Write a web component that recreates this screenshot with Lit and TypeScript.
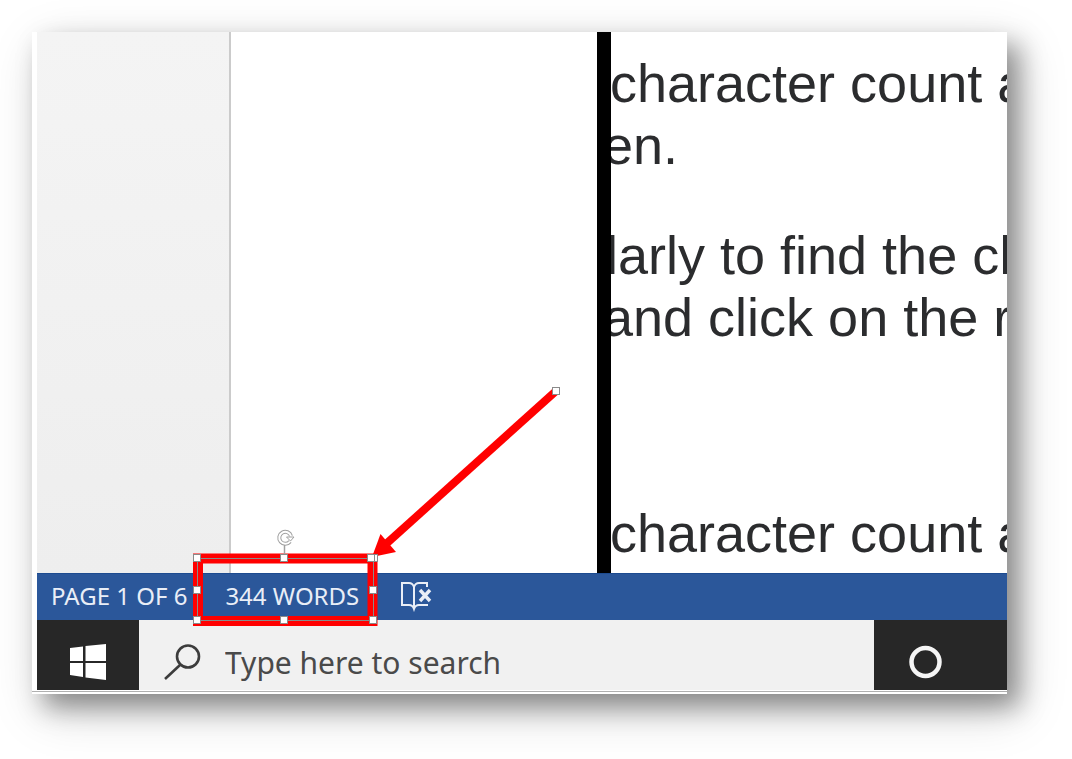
import { LitElement, html, css, svg } from "lit";
import { customElement } from "lit/decorators.js";

const HANDLES: [number, number][] = [
  [197, 558], [284, 558], [374, 558], [371, 558],
  [197, 590], [373, 590],
  [197, 620], [284, 620], [373, 620],
  [556, 391],
];

@customElement("word-document")
class WordDocument extends LitElement {
  static styles = css`
    :host { display: flex; min-height: 0; overflow: hidden; background: #fff; }
    .margin { flex: none; width: 192px; background: linear-gradient(#f4f4f4, #eeeeee); border-right: 2px solid #cbcbcb; }
    .sheet { flex: none; width: 366px; background: #fff; }
    .edge { flex: none; width: 14px; background: #000; z-index: 1; }
    .text { flex: 1; min-width: 0; margin-left: -8px; padding-top: 20px; overflow: hidden; white-space: nowrap;
      font: 54px/62px "Liberation Sans", Arial, sans-serif; color: #2b2c2e; }
    p { margin: 0; }
    .indent { padding-left: 7px; }
    .nudge { padding-left: 3px; }
    .gap { margin-top: 48px; }
    .wide-gap { margin-top: 154px; }
  `;
  render() {
    return html`
      <div class="margin"></div>
      <div class="sheet"></div>
      <div class="edge"></div>
      <div class="text">
        <p class="indent">character count a</p>
        <p>en.</p>
        <p class="nudge gap">larly to find the ch</p>
        <p>and click on the r</p>
        <p class="indent wide-gap">character count a</p>
      </div>
    `;
  }
}

@customElement("status-bar")
class StatusBar extends LitElement {
  static styles = css`
    :host { display: flex; align-items: center; height: 47px; box-sizing: border-box; padding: 0 0 2px 14px;
      background: #2b579a; border-top: 1px solid #1d4b90; }
    button { border: 0; padding: 0; background: none; color: #e9eef7; white-space: nowrap;
      font: 24px/32px "Noto Sans", "Open Sans", sans-serif; }
    .words { margin-left: 38px; }
    .proof { margin-left: 40px; height: 32px; }
    svg { display: block; }
  `;
  render() {
    return html`
      <button>PAGE 1 OF 6</button>
      <button class="words">344 WORDS</button>
      <button class="proof" aria-label="Proofing errors">
        <svg width="34" height="32" viewBox="0 0 34 32" fill="none" stroke="#e9eef7" stroke-width="2">
          <path d="M15 7 C14 4 12 3 10 3 H3 V25 H10 C12 25 14 26 15 29 C16 26 18 25 20 25 H29" />
          <path d="M15 6 V28 M15 7 C16 4 18 3 20 3 H28 V7" />
          <path d="M21 10 L31 21 M31 10 L21 21" stroke-width="3.4" />
        </svg>
      </button>
    `;
  }
}

@customElement("task-bar")
class TaskBar extends LitElement {
  static styles = css`
    :host { display: flex; height: 70px; background: #f1f1f1; }
    button { flex: none; display: flex; align-items: center; border: 0; background: #272727; }
    .start { width: 102px; padding: 14px 0 0 32px; }
    .cortana { width: 133px; padding: 14px 0 0 33px; }
    .search { flex: 1; min-width: 0; display: flex; align-items: center; gap: 24px; padding: 16px 0 0 24px; }
    svg { display: block; flex: none; }
    input { flex: 1; min-width: 0; border: 0; padding: 0; background: none; outline: 0;
      font: 30px/40px "Noto Sans", "Open Sans", sans-serif; height: 40px; }
    input::placeholder { color: #4a4a4a; opacity: 1; }
  `;
  render() {
    return html`
      <button class="start" aria-label="Start">
        <svg width="38" height="38" viewBox="0 0 38 38" fill="#fff">
          <path d="M1 5 L14 3.5 V18 H1Z M16.500 3 L37 1 V18 H16.500Z M1 20 H14 V34 L1 32Z M16.500 20 H37 V37 L16.500 34.500Z" />
        </svg>
      </button>
      <label class="search">
        <svg width="38" height="38" viewBox="0 0 38 38" fill="none" stroke="#3c3c3c" stroke-width="2.6">
          <circle cx="25" cy="12.5" r="11" /><path d="M17 21 L2 35" />
        </svg>
        <input type="text" aria-label="Search" placeholder="Type here to search" />
      </label>
      <button class="cortana" aria-label="Cortana">
        <svg width="36" height="36" viewBox="0 0 36 36" fill="none" stroke="#f5f5f5" stroke-width="4.5">
          <circle cx="18.5" cy="18" r="14" />
        </svg>
      </button>
    `;
  }
}

@customElement("app-root")
class AppRoot extends LitElement {
  static styles = css`
    :host { display: flex; box-sizing: border-box; height: 100vh; padding: 32px 65px 65px 32px; background: #fff; }
    .card { position: relative; flex: 1; min-width: 0; display: flex; flex-direction: column; background: #fff;
      box-shadow: 12px 13px 24px rgba(0, 0, 0, 0.38), 10px 16px 48px rgba(0, 0, 0, 0.18); }
    word-document { flex: 1; }
    word-document, status-bar, task-bar { margin-left: 5px; }
    .rule { height: 1px; margin: 1px 0 2px; background: #b0b0b0; }
    .marks { position: absolute; left: 148px; bottom: 54px; width: 400px; height: 260px; pointer-events: none; }
  `;
  render() {
    return html`
      <div class="card">
        <word-document></word-document>
        <status-bar></status-bar>
        <task-bar></task-bar>
        <div class="rule"></div>
        <svg class="marks" viewBox="180 380 400 260">
          <path d="M556 391 L386 544" stroke="#f00" stroke-width="8" />
          <path d="M372 557 L380.500 534 L396 552Z" fill="#f00" />
          <rect x="198" y="558.5" width="174.500" height="62.500" fill="none" stroke="#f00" stroke-width="10" />
          <rect x="197.5" y="558.5" width="176" height="62" fill="none" stroke="#8a8a8a" />
          <path d="M284.5 544 V555" stroke="#a0a0a0" stroke-width="1.5" />
          <g fill="none">
            <path d="M290 541.5 A6 6 0 1 1 291 536" stroke="#a0a0a0" stroke-width="4" />
            <path d="M290 541.5 A6 6 0 1 1 291 536" stroke="#fff" stroke-width="2" />
            <path d="M286.5 537 H294 L290.5 541Z" fill="#fff" stroke="#a0a0a0" />
          </g>
          ${HANDLES.map(
            ([x, y]) => svg`<rect x=${x - 3.5} y=${y - 3.5} width="7" height="7" fill="#fff" stroke="#8a8a8a" />`
          )}
        </svg>
      </div>
    `;
  }
}
